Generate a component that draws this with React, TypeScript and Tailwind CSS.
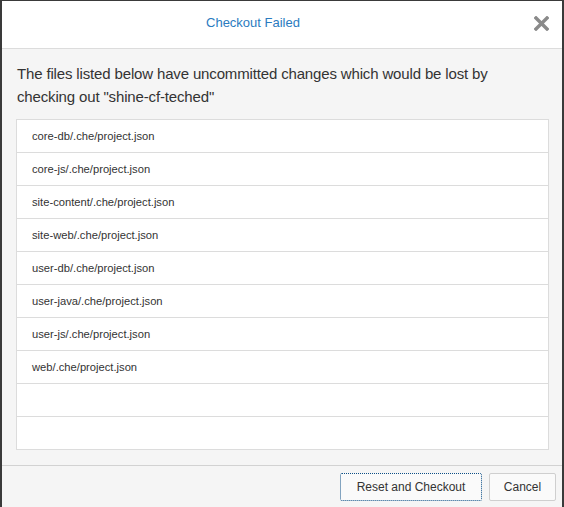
import React from "react";

const files = [
  "core-db/.che/project.json",
  "core-js/.che/project.json",
  "site-content/.che/project.json",
  "site-web/.che/project.json",
  "user-db/.che/project.json",
  "user-java/.che/project.json",
  "user-js/.che/project.json",
  "web/.che/project.json",
  "",
  "",
];

export default function App() {
  return (
    <div
      className="w-[564px] h-[507px] overflow-hidden bg-[#3a3a3a] pt-[1px] px-[2px]"
      style={{ fontFamily: '"Liberation Sans", Arial, sans-serif' }}
    >
      <div className="w-[560px] h-[506px] flex flex-col bg-[#f5f5f5]">
        <div className="h-[48px] shrink-0 bg-white border-b border-[#dcdcdc] flex items-start">
          <div className="flex-1 text-center text-[13px] leading-[20px] pt-[12px] text-[#2b7bc0]">
            Checkout Failed
          </div>
          <div className="w-[58px] flex justify-end pr-[13px] pt-[15px]">
            <svg width="15" height="15" viewBox="0 0 15 15">
              <path d="M2 2 L13 13 M13 2 L2 13" stroke="#8a8a8a" strokeWidth="3.4" strokeLinecap="square" />
            </svg>
          </div>
        </div>
        <div className="pl-[14px] pr-[13px] pt-[13px] pb-[15px] border-b border-[#d2d2d2]">
          <p className="text-[15px] tracking-[-0.15px] leading-[23px] text-[#333] pl-[1px]">
            The files listed below have uncommitted changes which would be lost by checking out "shine-cf-teched"
          </p>
          <div className="mt-[11px] border border-[#dcdcdc] bg-white">
            {files.map((f, i) => (
              <div
                key={i}
                className={`h-[32px] flex items-center pl-[15px] text-[11.2px] text-[#333] ${i > 0 ? "border-t border-[#dcdcdc] h-[33px]" : ""}`}
              >
                {f}
              </div>
            ))}
          </div>
        </div>
        <div className="flex justify-end gap-[7px] pt-[7px] pr-[6px]">
          <button className="h-[28px] w-[142px] border border-dotted border-[#0d4f86] rounded-[2px] bg-[#fafafa] text-[12px] text-[#333]">
            Reset and Checkout
          </button>
          <button className="h-[28px] w-[67px] border border-[#cfcfcf] rounded-[2px] bg-[#fafafa] text-[12px] text-[#333]">
            Cancel
          </button>
        </div>
      </div>
    </div>
  );
}
